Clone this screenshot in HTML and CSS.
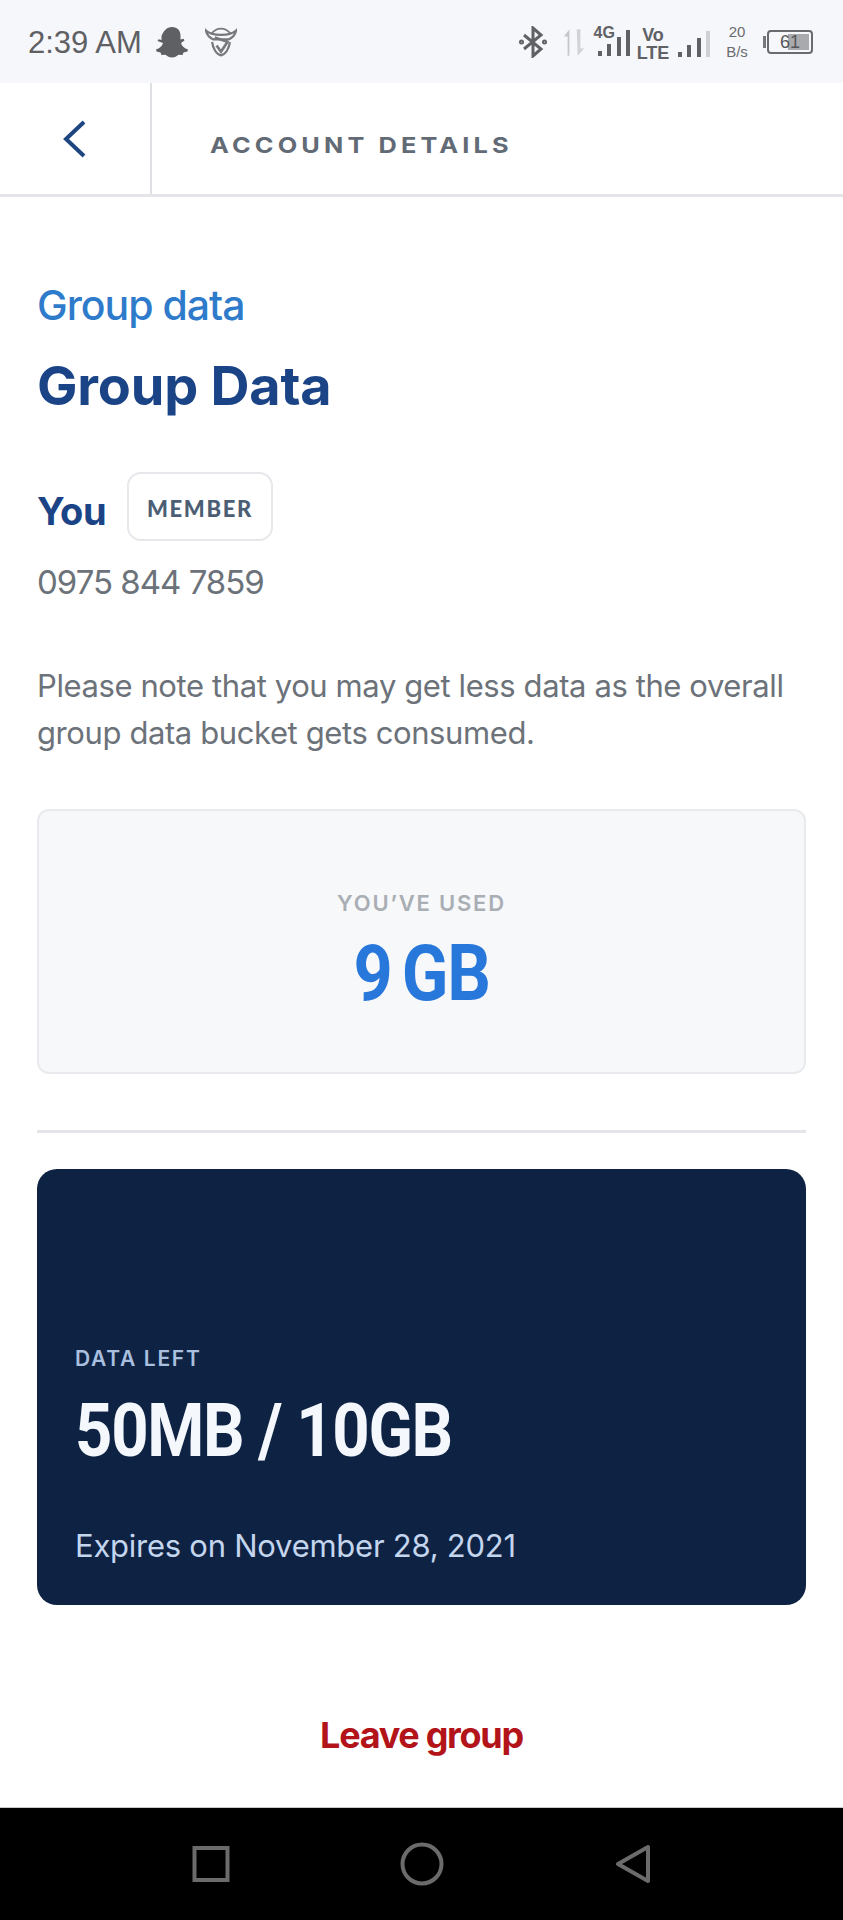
FILE: index.html
```html
<!DOCTYPE html>
<html lang="en">
<head>
  <meta charset="UTF-8" />
  <meta name="viewport" content="width=device-width, initial-scale=1.0"/>
  <title>Group Data</title>
  <link rel="stylesheet" href="styles.css">
</head>
<body>
  <div class="status-bar">
    <div class="status-left">
      <span class="clock">2:39 AM</span>
      <svg class="snap" width="34" height="32" viewBox="0 0 34 32"><path d="M17 1c5.500 0 8.500 4 8.500 8.500v4l3-.8 1 1.800-3.500 2.500c.8 3 3.500 5.500 7 6.500l-.5 2-4 1-1 2.500-4-.3c-2 1.500-3.500 2.800-6.500 2.800s-4.500-1.300-6.500-2.800l-4 .3-1-2.500-4-1-.5-2c3.500-1 6.200-3.500 7-6.500L2.500 15l1-1.800 3 .8v-4C8.500 5 11.500 1 17 1z" fill="#5f6064"/></svg>
      <svg class="shield" width="32" height="32" viewBox="0 0 36 34" fill="none" stroke="#77787c"><path d="M1 4c4 4 9 5 17 5s13-1 17-5c-1 5-4 8-8 10H9C5 12 2 9 1 4z" stroke-width="2.500"/><path d="M7 8c3-4 7-6 11-6s8 2 11 6" stroke-width="2"/><path d="M8 17c1 8 5 14 10 15 5-1 9-7 10-15" stroke-width="2.500"/><path d="M11 12l15 5M13 21l5 7 8-12" stroke-width="3"/></svg>
    </div>
    <div class="status-right">
      <svg width="28" height="32" viewBox="0 0 28 32" fill="none" stroke="#606165" stroke-width="3"><path d="M5 9l17 14-8 7V2l8 7L5 23"/><circle cx="2.500" cy="16" r="1" /><circle cx="25.500" cy="16" r="1" /></svg>
      <svg class="transfer" width="22" height="30" viewBox="0 0 24 30"><path d="M5 30V9H1l6-8v29z" fill="#c6c7ca"/><path d="M15 1h4v21h4l-7 8z" fill="#d2d3d6"/></svg>
      <div class="signal-group">
        <span class="net-label">4G</span>
        <div class="bars">
          <i class="bar b1"></i><i class="bar b2"></i><i class="bar b3"></i><i class="bar b4"></i>
        </div>
      </div>
      <div class="volte"><span>Vo</span><span>LTE</span></div>
      <div class="bars sim2">
        <i class="bar b1"></i><i class="bar b2"></i><i class="bar b3"></i><i class="bar b4 off"></i>
      </div>
      <div class="speed"><span>20</span><span>B/s</span></div>
      <div class="battery">
        <div class="battery-body"><div class="battery-fill"></div><span>61</span></div>
      </div>
    </div>
  </div>

  <header class="top-bar">
    <div class="back-cell">
      <svg width="26" height="40" viewBox="0 0 26 40" fill="none"><path d="M22 3L4 20l18 17" stroke="#1d4580" stroke-width="4"/></svg>
    </div>
    <div class="top-title">ACCOUNT DETAILS</div>
  </header>

  <main class="content">
    <div class="eyebrow">Group data</div>
    <h1>Group Data</h1>

    <div class="you-row">
      <span class="you">You</span>
      <span class="chip">MEMBER</span>
    </div>
    <div class="phone">0975 844 7859</div>

    <p class="note">Please note that you may get less data as the overall group data bucket gets consumed.</p>

    <div class="used-card">
      <div class="used-label">YOU’VE USED</div>
      <div class="used-value">9 GB</div>
    </div>

    <hr class="rule">

    <div class="left-card">
      <div class="left-label">DATA LEFT</div>
      <div class="left-value">50MB / 10GB</div>
      <div class="left-expiry">Expires on November 28, 2021</div>
    </div>

    <div class="leave">Leave group</div>
  </main>

  <nav class="nav-bar">
    <svg width="38" height="38" viewBox="0 0 38 38" fill="none"><rect x="2.500" y="3" width="33" height="32" stroke="#6b6b6b" stroke-width="4"/></svg>
    <svg width="44" height="44" viewBox="0 0 44 44" fill="none"><circle cx="22" cy="22" r="19.500" stroke="#6b6b6b" stroke-width="4"/></svg>
    <svg width="38" height="40" viewBox="0 0 38 40" fill="none"><path d="M34 3v34L4 20z" stroke="#6b6b6b" stroke-width="4" stroke-linejoin="round"/></svg>
  </nav>
</body>
</html>
```

FILE: styles.css
```css
* {
  box-sizing: border-box;
}
body {
  margin: 0;
  width: 843px;
  height: 1920px;
  overflow: hidden;
  background: #ffffff;
  font-family: Inter, "Liberation Sans", sans-serif;
  color: #6b7178;
  display: flex;
  flex-direction: column;
}

/* status bar */
.status-bar {
  height: 83px;
  flex: none;
  background: #f6f7fb;
  display: flex;
  justify-content: space-between;
  align-items: center;
  padding: 0 30px 0 28px;
}
.status-left {
  display: flex;
  align-items: center;
}
.clock {
  font-family: "Liberation Sans", sans-serif;
  font-size: 31px;
  color: #5f6064;
  margin-right: 13px;
  padding-top: 3px;
}
.shield {
  margin-left: 16px;
}
.status-right {
  display: flex;
  align-items: center;
}
.transfer {
  margin-left: 16px;
}
.signal-group {
  position: relative;
  width: 37px;
  height: 38px;
  margin-left: 9px;
  padding: 0 0 5px 4px;
  display: flex;
  align-items: flex-end;
}
.net-label {
  position: absolute;
  top: 1px;
  left: 0;
  font: bold 16px "Liberation Sans", sans-serif;
  color: #606165;
}
.bars {
  display: flex;
  align-items: flex-end;
  gap: 5.500px;
  height: 26px;
}
.bar {
  display: block;
  width: 4px;
  background: #606165;
}
.b1 { height: 5px; }
.b2 { height: 12px; }
.b3 { height: 19px; }
.b4 { height: 26px; }
.bar.off {
  background: #cfd0d3;
}
.volte {
  display: flex;
  flex-direction: column;
  align-items: center;
  width: 29px;
  margin-left: 8px;
  padding-top: 4px;
  font: bold 18px/18px "Liberation Sans", sans-serif;
  color: #606165;
}
.sim2 {
  margin-left: 10px;
  margin-top: 4px;
}
.speed {
  display: flex;
  flex-direction: column;
  align-items: center;
  width: 24px;
  margin-left: 15px;
  font: 15px/20px "Liberation Sans", sans-serif;
  color: #6a6b6f;
}
.battery {
  position: relative;
  margin-left: 14px;
  padding-left: 4px;
}
.battery:before {
  content: "";
  position: absolute;
  left: 0;
  top: 6px;
  width: 3px;
  height: 12px;
  background: #77787c;
}
.battery-body {
  position: relative;
  width: 46px;
  height: 24px;
  border: 2px solid #6a6b6f;
  border-radius: 4px;
  text-align: center;
  font: 18px/20px "Liberation Sans", sans-serif;
  color: #55565a;
}
.battery-fill {
  position: absolute;
  top: 2px;
  bottom: 2px;
  right: 2px;
  width: 21px;
  background: #a9aaad;
}
.battery-body span {
  position: relative;
}

/* header */
.top-bar {
  height: 114px;
  flex: none;
  display: flex;
  border-bottom: 3px solid #e3e5e8;
}
.back-cell {
  width: 152px;
  border-right: 2px solid #dddfe2;
  display: flex;
  align-items: center;
  padding-left: 62px;
}
.top-title {
  margin-left: 58px;
  padding-top: 12px;
  align-self: center;
  font-size: 22px;
  font-weight: 700;
  letter-spacing: 3.600px;
  transform: scaleX(1.15);
  transform-origin: left center;
  color: #626b75;
}

/* main content */
.content {
  flex: 1;
  padding: 0 37px;
}
.eyebrow {
  margin-top: 84px;
  font-size: 41px;
  font-weight: 500;
  line-height: 48px;
  letter-spacing: -1px;
  color: #2f7bcb;
}
h1 {
  margin: 27px 0 0;
  font-size: 54px;
  font-weight: 700;
  line-height: 60px;
  letter-spacing: -0.200px;
  color: #1b4486;
}
.you-row {
  display: flex;
  align-items: center;
  margin-top: 56px;
}
.you {
  font-size: 38px;
  font-weight: 700;
  color: #1b4486;
  letter-spacing: -0.500px;
  width: 90px;
  padding-top: 8px;
}
.chip {
  width: 146px;
  height: 69px;
  border: 2px solid #e6e8eb;
  border-radius: 14px;
  display: flex;
  align-items: center;
  justify-content: center;
  padding-top: 4px;
  font-family: Lato, sans-serif;
  font-size: 22px;
  font-weight: 900;
  letter-spacing: 1.700px;
  color: #4c5e74;
}
.phone {
  margin-top: 19px;
  font-size: 33px;
  line-height: 44px;
  letter-spacing: -1px;
  color: #6c7279;
}
.note {
  margin: 58px 0 0;
  font-size: 31px;
  line-height: 47px;
  letter-spacing: -0.400px;
  color: #6c7279;
}
.used-card {
  margin-top: 53px;
  height: 265px;
  background: #f7f8fa;
  border: 2px solid #e8eaed;
  border-radius: 12px;
  display: flex;
  flex-direction: column;
  align-items: center;
  padding-top: 79px;
}
.used-label {
  font-size: 22px;
  font-weight: 600;
  letter-spacing: 1.800px;
  line-height: 26px;
  color: #a9aeb4;
}
.used-value {
  margin-top: 19px;
  font-family: Roboto, sans-serif;
  font-size: 77px;
  font-weight: 700;
  line-height: 78px;
  letter-spacing: -1.500px;
  word-spacing: -6px;
  color: #2878db;
  transform: scaleX(0.89);
}
.rule {
  margin: 56px 0 0;
  border: 0;
  border-top: 3px solid #e3e5e8;
}
.left-card {
  margin-top: 36px;
  height: 436px;
  background: #0e2344;
  border-radius: 20px;
  padding: 176px 38px 0;
}
.left-label {
  font-size: 21px;
  font-weight: 600;
  letter-spacing: 1.700px;
  line-height: 28px;
  color: #a9bfdf;
}
.left-value {
  margin-top: 17px;
  font-family: Roboto, sans-serif;
  font-size: 75px;
  font-weight: 700;
  line-height: 80px;
  letter-spacing: -1.500px;
  color: #f4f7fb;
  white-space: nowrap;
  transform: scaleX(0.87);
  transform-origin: left center;
}
.left-expiry {
  margin-top: 56px;
  font-size: 31px;
  line-height: 40px;
  letter-spacing: -0.250px;
  color: #c4d5ee;
}
.leave {
  margin-top: 107px;
  text-align: center;
  font-size: 36px;
  font-weight: 700;
  line-height: 46px;
  letter-spacing: -1.300px;
  color: #b3141a;
}

/* android nav */
.nav-bar {
  height: 113px;
  flex: none;
  background: #000000;
  border-top: 1px solid #c9c9c9;
  display: grid;
  grid-template-columns: 211px 211px 211px;
  justify-content: center;
  justify-items: center;
  align-items: center;
}
```
